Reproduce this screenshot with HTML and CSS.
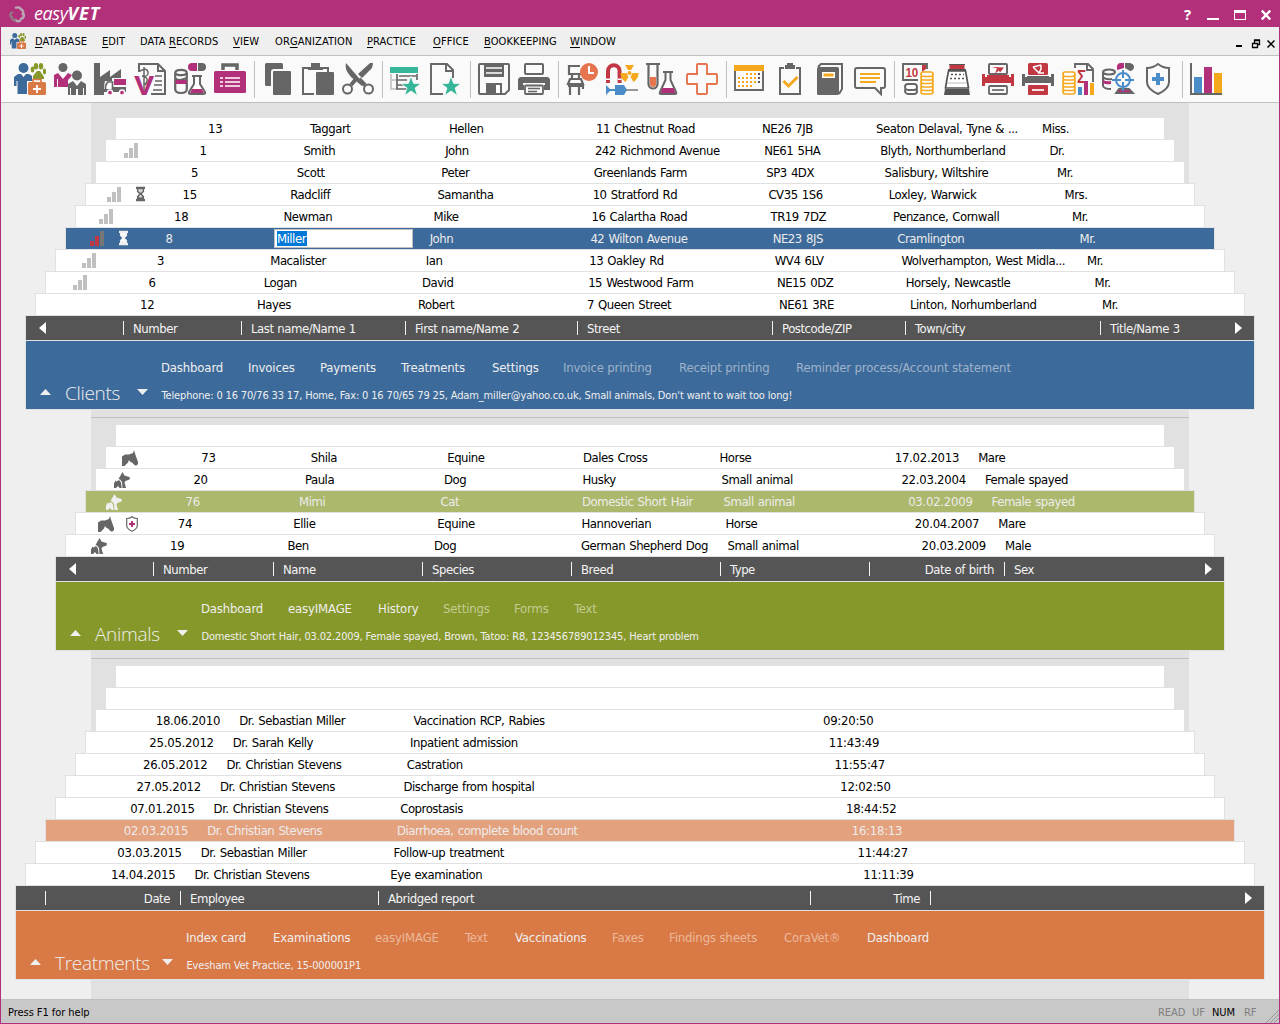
FILE: index.html
```html
<!DOCTYPE html>
<html lang="en">
<head>
<meta charset="utf-8">
<title>easyVET</title>
<link rel="stylesheet" href="styles.css">
</head>
<body>
<svg class="defs" width="0" height="0">
  <symbol id="bars" viewBox="0 0 14 15"><path d="M0 10h4v5H0z"/><path d="M5 5h4v10H5z"/><path class="last" d="M10 0h4v15h-4z"/></symbol>
  <symbol id="glass" viewBox="0 0 10 16"><path fill="currentColor" d="M0 0h10v2.500H9v3L6.500 8 9 10.500v3h1V16H0v-2.500h1v-3L3.500 8 1 5.500v-3H0z"/><path class="hole" d="M2.500 2.800h5v1.800L5 7 2.500 4.600zM4.500 9h1L7 11l-1 1H4l-1-1z"/></symbol>
  <symbol id="horse" viewBox="0 0 16 16"><path fill="currentColor" d="M0 16V6.500l3-2h4L11 3l1-3 1 3.500L16 12v2l-1.500 1.500H13L10 12.500 8.500 12 7 10l-1 2.500L2.500 16z"/></symbol>
  <symbol id="dog" viewBox="0 0 16 16"><path fill="currentColor" d="M8.500 0L10.500 3.500 16 5.200l-.5 2.300L11.500 9l-1 1.500L12 16H8.500L8 10 6 7.500 4.500 7z"/><path fill="currentColor" d="M0 16v-4.500L1.500 8.500l1 1L5 8l2 2.500L7.700 16H5.500L4 14l-2 2z"/></symbol>
  <symbol id="coins" viewBox="0 0 14 24"><g fill="#fff" stroke="#f5a81c" stroke-width="1.700"><rect x="1" y="18.500" width="12" height="4.500" rx="2.200"/><rect x="1" y="15" width="12" height="4.500" rx="2.200"/><rect x="1" y="11.500" width="12" height="4.500" rx="2.200"/><rect x="1" y="8" width="12" height="4.500" rx="2.200"/><rect x="1" y="4.500" width="12" height="4.500" rx="2.200"/><rect x="1" y="1" width="12" height="4.500" rx="2.200"/></g></symbol>
  <symbol id="team" viewBox="0 0 32 32">
    <circle cx="9.500" cy="5" r="5" fill="#3c6a9a"/><path fill="#3c6a9a" d="M4 11h3l2.500 3 2.500-3h3l3 2v6l-4 2v10H3.500V18H2.500v5H0V14z"/>
    <g fill="#869829"><ellipse cx="18.500" cy="6.500" rx="1.800" ry="3"/><ellipse cx="22" cy="3.200" rx="2.200" ry="3.200"/><ellipse cx="27" cy="3.200" rx="2.200" ry="3.200"/><ellipse cx="30.500" cy="8.500" rx="1.600" ry="3"/><path d="M19 13l4-5h3l4 6v2H19z"/></g>
    <rect x="13" y="18" width="20" height="15" fill="#fafafa"/><path d="M19 19.500v-3h8v3" fill="none" stroke="#d97946" stroke-width="1.700"/><rect x="14" y="19" width="18" height="13" rx="1.500" fill="#d97946"/><path d="M23 22v8M19 26h8" stroke="#fff" stroke-width="1.800"/>
  </symbol>
</svg>
<div class="window">
  <header class="titlebar">
    <svg class="swirl" viewBox="0 0 17 17" fill="none" stroke="#bba6b4" stroke-width="2.400"><path d="M6 2q5-2 6 2M12 3q4 3 1 6M15 8q0 5-4 5M12 14q-4 3-6-1"/><path d="M7 15q-5-1-4-5M3 12Q-1 8 4 6" stroke="#8e7a87"/></svg>
    <h1 class="brand">easy<b>VET</b></h1>
    <div class="wincontrols"><span class="help">?</span>
      <svg width="12" height="14" viewBox="0 0 12 14"><path fill="#fff" d="M0 10h12v2H0z"/></svg>
      <svg width="12" height="14" viewBox="0 0 12 14"><path fill="#fff" fill-rule="evenodd" d="M0 2h12v10H0zM1 5v6h10V5z"/></svg>
      <svg width="10" height="14" viewBox="0 0 10 14"><path stroke="#fff" stroke-width="2.400" d="M.8 2.500l8.400 9M9.200 2.500l-8.400 9"/></svg>
    </div>
  </header>
  <nav class="menubar">
    <svg class="appicon"><use href="#team"/></svg>
    <div class="menus"><span><u>D</u>ATABASE</span><span><u>E</u>DIT</span><span>DATA <u>R</u>ECORDS</span><span><u>V</u>IEW</span><span>OR<u>G</u>ANIZATION</span><span><u>P</u>RACTICE</span><span><u>O</u>FFICE</span><span><u>B</u>OOKKEEPING</span><span><u>W</u>INDOW</span></div>
    <svg class="mdi" width="40" height="10" viewBox="0 0 40 10" fill="none" stroke="#000"><path d="M1 7h6" stroke-width="2"/><path d="M17.500 4.500h5v4h-5zM17 4.500h6M19.500 4V1.500h5v4H23M19 1h6" stroke-width="1.300"/><path d="M32.500 1.500l7 7M39.500 1.500l-7 7" stroke-width="1.500"/></svg>
  </nav>
  <div class="toolbar">
    <svg><use href="#team"/></svg>
    <svg viewBox="0 0 32 32"><circle cx="9" cy="4.500" r="4.500" fill="#666"/><path fill="#b2307a" d="M0 24V12l4-2 5 6 5-6 4 2-2 3-2 2v7H4v-8H3v8z"/><circle cx="23" cy="12.500" r="5" fill="#666"/><path fill="#666" d="M14 32V21l5-3 4 5 4-5 5 3v11h-2v-7h-1v7h-5v-6h-2v6h-5v-7h-1v7z"/></svg>
    <svg viewBox="0 0 32 32"><path fill="#666" d="M0 0h6v14l10-7v7l11-8v9H18v3H11l-1 5v9H0z"/><path d="M11.500 27v-4l2-4h5v8z" fill="#fff" stroke="#666" stroke-width="1.700"/><path fill="#666" d="M19 24h13v5H10v-3h9z"/><path fill="#b2307a" d="M20 16h12v6H20z"/><g fill="#b2307a" stroke="#fafafa" stroke-width="1.500"><circle cx="16" cy="29.500" r="2.600"/><circle cx="28" cy="29.500" r="2.600"/></g></svg>
    <svg viewBox="0 0 32 32"><path d="M5 9V1h19l7 7v23H17M24 1v7h7" fill="none" stroke="#666" stroke-width="2"/><path d="M21 13h7M21 18h7M20 22h8M19 27h9M10 4v25M6 8q7-4 8 1t-6 4q6 1 5 5t-3 4" fill="none" stroke="#666" stroke-width="1.500"/><text x="0" y="32" font-size="28" font-weight="700" textLength="20" lengthAdjust="spacingAndGlyphs" fill="#b2307a" font-family="Liberation Sans">V</text></svg>
    <svg viewBox="0 0 32 32"><g fill="none" stroke="#666" stroke-width="2.200"><ellipse cx="7" cy="9.500" rx="5.700" ry="2.700"/><path d="M1.200 10v16q0 4 5.800 4t5.800-4V10M1.200 15q2 4 11.600 0"/></g><path d="M1.500 17h11v4h-11z" fill="#b2307a"/><path d="M18 0h5v8h-5a4 4 0 010-8z" fill="#b2307a"/><path d="M24 0h4a4 4 0 010 8h-4z" fill="#666"/><path d="M18 13h10M20 13v8l-5 8q-1 2 2 2h12q3 0 2-2l-5-8v-8" fill="#fff" stroke="#666" stroke-width="2"/><path d="M18 26h10l2 4H16z" fill="#b2307a"/></svg>
    <svg viewBox="0 0 32 32"><path d="M9 7V2h14v5" fill="none" stroke="#666" stroke-width="3.500"/><rect y="8" width="32" height="22" rx="1.500" fill="#b2307a"/><path d="M6 15h3M6 19h3M6 23h3M11 15h15M11 19h15M11 23h15" stroke="#fff" stroke-width="1.700"/></svg>
    <i></i>
    <svg viewBox="0 0 32 32"><rect x="3" width="18" height="23" rx="1.500" fill="#666"/><rect x="10" y="7" width="20" height="26" rx="2" fill="#666" stroke="#fafafa" stroke-width="2"/></svg>
    <svg viewBox="0 0 32 32"><path d="M12 31H1V5h5M25 5h-3" fill="none" stroke="#666" stroke-width="2"/><path d="M6 7V4h3V0h9v4h3v3z" fill="#666"/><path d="M21 5h5v5" fill="none" stroke="#666" stroke-width="2"/><rect x="14" y="9" width="18" height="23" rx="1" fill="#666"/></svg>
    <svg viewBox="0 0 32 32"><path d="M4 0l18 21-2 2L9 14Q2 6 4 0zM31 0q0 5-4 8l-7 7-4-4L28 0z" fill="#666"/><path d="M14 16l-5 6M17 16l6 6" stroke="#666" stroke-width="4"/><circle cx="5.500" cy="26" r="4.500" fill="#fafafa" stroke="#666" stroke-width="2"/><circle cx="26.500" cy="26" r="4.500" fill="#fafafa" stroke="#666" stroke-width="2"/></svg>
    <i></i>
    <svg viewBox="0 0 32 32"><path fill="#35b698" d="M0 4h28v6H0z"/><path d="M1 11v15h6M1 17h6" fill="none" stroke="#ccc" stroke-width="2"/><path d="M7 11v15h11M7 17h10M7 22h8M27 11v6M9 13h17" fill="none" stroke="#666" stroke-width="1.700"/><path fill="#35b698" stroke="#fafafa" stroke-width=".8" d="M21 13l2.600 7.400h7.400l-5.900 4.600 2.300 7.500-6.400-4.500-6.400 4.500 2.400-7.500L11 20.400h7.400z"/></svg>
    <svg viewBox="0 0 32 32"><path d="M13 31H1V1h16l6 6v8M16 1v7h7" fill="none" stroke="#666" stroke-width="1.900"/><path fill="#35b698" stroke="#fafafa" stroke-width=".8" d="M21 13l2.600 7.400h7.400l-5.900 4.600 2.300 7.500-6.400-4.500-6.400 4.500 2.400-7.500L11 20.400h7.400z"/></svg>
    <i></i>
    <svg viewBox="0 0 32 32"><path d="M2 1h28q1 0 1 1v25l-4 4H2q-1 0-1-1V2q0-1 1-1z" fill="none" stroke="#666" stroke-width="2"/><path fill="#666" d="M6 2h20v12H6zM8 20h16v12H8z"/><path d="M8 5h16M8 10h16" stroke="#fff" stroke-width="1.600"/><path d="M18 22h4v8h-4z" fill="#fff"/></svg>
    <svg viewBox="0 0 32 32"><path fill="#666" d="M2 14h28l2 2v11h-6v-5H6v5H0V16z"/><rect x="7" y="1" width="18" height="10" rx="1" fill="#fafafa" stroke="#666" stroke-width="2"/><path d="M5 20h22v2H5z" fill="#fafafa"/><rect x="7" y="22.500" width="18" height="8.500" rx="1" fill="#fafafa" stroke="#666" stroke-width="1.800"/><path d="M10 25.500h12M10 28.500h9" stroke="#666" stroke-width="1.500"/></svg>
    <i></i>
    <svg viewBox="0 0 32 32"><path d="M14 3H3v8h12M6 11v4M13 11v4M4 16h11l2 5H2zM4 22v10M13 24v8M2 23h15v3" fill="none" stroke="#666" stroke-width="2.200"/><circle cx="23" cy="9" r="9" fill="#e6744e"/><path d="M23 3v7h5" fill="none" stroke="#fff" stroke-width="2"/></svg>
    <svg viewBox="0 0 32 32"><path d="M2 20V8a5.800 5.800 0 0111.600 0v12" fill="none" stroke="#c13843" stroke-width="4"/><path d="M0 15.500h4v1.500H0zM11.600 15.500h4v1.500h-4z" fill="#fff"/><g fill="#f5a81c"><circle cx="23.500" cy="10" r="2"/><path d="M19 2h9l-3 5h-3zM14.500 10h6l2 4-3 5q-5-3-5-9zM32.500 10h-6l-2 4 3 5q5-3 5-9z"/></g><path fill="#4b8dc9" d="M0 22l4 4h5v-4h9l3 5-3 5H9v-4H4l-4 4z"/><path d="M20 27h12" stroke="#777" stroke-width="1.500"/></svg>
    <svg viewBox="0 0 32 32"><path d="M0 1h14M2.500 1v20a4.500 4.500 0 009 0V1" fill="none" stroke="#666" stroke-width="2.200"/><path d="M4 14h6v7a3 3 0 01-6 0z" fill="#e6744e"/><path d="M17 9h10M19.500 9v8L14 29q-1 2 1 2h14q2 0 1-2l-5.500-12V9" fill="#fff" stroke="#666" stroke-width="2"/><path d="M16.500 25h11l2 5h-15z" fill="#b2307a"/></svg>
    <svg viewBox="0 0 32 32"><path d="M12 1h8q1 0 1 1v9h9q1 0 1 1v8q0 1-1 1h-9v9q0 1-1 1h-8q-1 0-1-1v-9H2q-1 0-1-1v-8q0-1 1-1h9V2q0-1 1-1z" fill="none" stroke="#e6744e" stroke-width="1.900"/></svg>
    <i></i>
    <svg viewBox="0 0 32 32"><path fill="none" stroke="#666" stroke-width="1.900" d="M1 7v20h28V7"/><path fill="#f5a81c" d="M0 2h30v6H0z"/><g stroke="#f5a81c" stroke-width="2" stroke-dasharray="2 2"><path d="M12 11h12M4 15h20M4 19h20M4 23h14"/></g><path d="M25 10v10" stroke="#555" stroke-width="2" stroke-dasharray="2 2"/></svg>
    <svg viewBox="0 0 32 32"><path d="M10 5H6v26h20V5h-4" fill="none" stroke="#666" stroke-width="2"/><path d="M11 6V2h2V0h6v2h2v4z" fill="#666"/><path d="M9.500 18l5 5 9-9" fill="none" stroke="#f5a81c" stroke-width="3"/></svg>
    <svg viewBox="0 0 32 32"><path d="M4 4l3-3h21v25l-3 5" fill="none" stroke="#666" stroke-width="2"/><rect x="3" y="4" width="22" height="28" rx="1.500" fill="#666"/><path d="M8 9h13v6H8z" fill="#fff"/><path d="M9.500 10.500h10v3h-10z" fill="#f5a81c"/></svg>
    <svg viewBox="0 0 32 32"><path d="M3 5h26q2 0 2 2v16q0 2-2 2h-2v6l-6-6H3q-2 0-2-2V7q0-2 2-2z" fill="none" stroke="#666" stroke-width="2"/><path d="M6 11h20M6 15h20M6 19h16" stroke="#f5a81c" stroke-width="1.900"/></svg>
    <i></i>
    <svg viewBox="0 0 32 32"><path d="M16 17H1V1h24v5" fill="none" stroke="#666" stroke-width="1.900"/><path d="M20 2h4v4l-4 3z" fill="#c13843"/><text x="3.500" y="14" font-size="13" font-weight="700" textLength="12.500" lengthAdjust="spacingAndGlyphs" fill="#c13843" font-family="Liberation Sans">10</text><g fill="#fff" stroke="#666" stroke-width="1.900"><rect x="3" y="25" width="12" height="6" rx="3"/><rect x="3" y="21" width="12" height="6" rx="3"/></g><use href="#coins" x="18" y="8" width="14" height="24"/></svg>
    <svg viewBox="0 0 32 32"><path d="M7.500 2h15v6h-15z" fill="#c13843"/><path d="M7 1h16v1H7zM6 6h18v2H6z" fill="#555"/><path d="M6.500 8h17l1.500 8 1.500 9h-23L5 16z" fill="#fff" stroke="#555" stroke-width="1.700"/><path d="M9 11.500h13M8 15.500h16" stroke="#555" stroke-width="1.700" stroke-dasharray="2 2"/><path d="M5 20h20" stroke="#bbb"/><path d="M3 26h24l1 6H2z" fill="#555"/></svg>
    <svg viewBox="0 0 32 32"><path fill="#c13843" d="M0 11h3v3h26v-3h3v12h-3v-3H3v3H0z"/><path d="M5 14V10h22v4" fill="#fafafa"/><rect x="7" y="1" width="18" height="10" rx="1" fill="#fafafa" stroke="#666" stroke-width="2"/><path d="M5 12h22v2H5z" fill="#c13843"/><path d="M10 4l12 .5-4 5-1-2-4 3 2-5z" fill="#c13843"/><rect x="7" y="23" width="18" height="8" rx="1" fill="#fafafa" stroke="#666" stroke-width="1.800"/><path d="M10 27h12" stroke="#666" stroke-width="1.700"/></svg>
    <svg viewBox="0 0 32 32"><path fill="#666" d="M0 11h3v3h26v-3h3v12h-3v-3H3v3H0z"/><path d="M5 13h22v2H5z" fill="#666"/><rect x="6" width="20" height="12" rx="1.500" fill="#c13843"/><path d="M11 4l8-2M11 4l6 6M19 2v4l-2 4h5" fill="none" stroke="#fff" stroke-width="1.500"/><rect x="6" y="22" width="20" height="10" rx="1" fill="#c13843"/><path d="M10 27h12" stroke="#fff" stroke-width="1.700"/></svg>
    <svg viewBox="0 0 32 32"><path d="M13 5V1h13l5 5v13M25 1v6h6" fill="none" stroke="#666" stroke-width="1.900"/><text x="15" y="20" font-size="19" font-weight="700" textLength="9" lengthAdjust="spacingAndGlyphs" fill="#c13843" font-family="Liberation Sans">Σ</text><use href="#coins" x="0" y="8" width="14" height="24"/><path d="M16 24h4v8h-4z" fill="#4b8dc9"/><path d="M22 18h4v14h-4z" fill="#b2307a"/><path d="M28 20h4v12h-4z" fill="#f5a81c"/></svg>
    <svg viewBox="0 0 32 32"><g fill="none" stroke="#666" stroke-width="2"><ellipse cx="7" cy="9" rx="6" ry="2.500"/><path d="M1 9v14q1 3 8 3M1 14q2 3 9 2"/></g><path d="M1 17q4 2 8 1v3q-5 1-8-1z" fill="#b2307a"/><path d="M18 0h4v5l-7 2q-1-6 3-7z" fill="#b2307a"/><path d="M23 0h5q4 1 4 4t-4 4l-5-3z" fill="#666"/><path d="M14 30l3-4h10l4 4z" fill="#b2307a" stroke="#666" stroke-width="1.800"/><circle cx="21" cy="17" r="7" fill="#fafafa" stroke="#4b8dc9" stroke-width="2"/><path d="M21 7v8M21 19v9M10 17h9M23 17h9" stroke="#4b8dc9" stroke-width="2"/></svg>
    <svg viewBox="0 0 32 32"><path d="M16 1q5 4 11 4v14q0 7-11 12Q5 26 5 19V5q6 0 11-4z" fill="none" stroke="#666" stroke-width="2"/><path d="M16 10v12M10 16h12" stroke="#4b8dc9" stroke-width="4"/></svg>
    <i></i>
    <svg viewBox="0 0 32 32"><path d="M1 0v31h31" fill="none" stroke="#666" stroke-width="2"/><path d="M4 14h8v16H4z" fill="#4b8dc9"/><path d="M14 4h8v26h-8z" fill="#b2307a"/><path d="M24 10h8v20h-8z" fill="#f5a81c"/></svg>
  </div>
  <main>
   <div class="stripe">
    <section class="clients">
      <div class="row i0"><span></span><span class="n">13</span><span>Taggart</span><span>Hellen</span><span>11 Chestnut Road</span><span>NE26 7JB</span><span>Seaton Delaval, Tyne &amp; ...</span><span>Miss.</span></div>
      <div class="row i1"><span><svg class="bars"><use href="#bars"/></svg></span><span class="n">1</span><span>Smith</span><span>John</span><span>242 Richmond Avenue</span><span>NE61 5HA</span><span>Blyth, Northumberland</span><span>Dr.</span></div>
      <div class="row i2"><span></span><span class="n">5</span><span>Scott</span><span>Peter</span><span>Greenlands Farm</span><span>SP3 4DX</span><span>Salisbury, Wiltshire</span><span>Mr.</span></div>
      <div class="row i3"><span><svg class="bars"><use href="#bars"/></svg><svg class="glass"><use href="#glass"/></svg></span><span class="n">15</span><span>Radcliff</span><span>Samantha</span><span>10 Stratford Rd</span><span>CV35 1S6</span><span>Loxley, Warwick</span><span>Mrs.</span></div>
      <div class="row i4"><span><svg class="bars"><use href="#bars"/></svg></span><span class="n">18</span><span>Newman</span><span>Mike</span><span>16 Calartha Road</span><span>TR19 7DZ</span><span>Penzance, Cornwall</span><span>Mr.</span></div>
      <div class="row i5 selected"><span><svg class="bars hot" viewBox="0 0 14 15"><path d="M0 10h4v5H0zM5 5h4v10H5z"/><path fill="#777" d="M10 0h4v15h-4z"/></svg><svg class="glass"><use href="#glass"/></svg></span><span class="n">8</span><span><span class="edit"><mark>Miller</mark></span></span><span>John</span><span>42 Wilton Avenue</span><span>NE23 8JS</span><span>Cramlington</span><span>Mr.</span></div>
      <div class="row i6"><span><svg class="bars"><use href="#bars"/></svg></span><span class="n">3</span><span>Macalister</span><span>Ian</span><span>13 Oakley Rd</span><span>WV4 6LV</span><span>Wolverhampton, West Midla...</span><span>Mr.</span></div>
      <div class="row i7"><span><svg class="bars"><use href="#bars"/></svg></span><span class="n">6</span><span>Logan</span><span>David</span><span>15 Westwood Farm</span><span>NE15 0DZ</span><span>Horsely, Newcastle</span><span>Mr.</span></div>
      <div class="row i8"><span></span><span class="n">12</span><span>Hayes</span><span>Robert</span><span>7 Queen Street</span><span>NE61 3RE</span><span>Linton, Norhumberland</span><span>Mr.</span></div>
      <div class="head"><span class="prev"></span><span>Number</span><span>Last name/Name 1</span><span>First name/Name 2</span><span>Street</span><span>Postcode/ZIP</span><span>Town/city</span><span>Title/Name 3</span><b class="next"></b></div>
      <div class="foot"><div class="name"><b class="up"></b><h2>Clients</h2><b class="down"></b></div>
        <div class="info"><div class="tabs"><a>Dashboard</a><a>Invoices</a><a>Payments</a><a>Treatments</a><a>Settings</a><a class="off">Invoice printing</a><a class="off">Receipt printing</a><a class="off">Reminder process/Account statement</a></div><p>Telephone: 0 16 70/76 33 17, Home, Fax: 0 16 70/65 79 25, Adam_miller@yahoo.co.uk, Small animals, Don't want to wait too long!</p></div></div>
    </section>
    <hr>
    <section class="animals">
      <div class="row i0"></div>
      <div class="row i1"><span><svg class="pet"><use href="#horse"/></svg></span><span class="n">73</span><span>Shila</span><span>Equine</span><span>Dales Cross</span><span>Horse</span><span class="r">17.02.2013</span><span>Mare</span></div>
      <div class="row i2"><span><svg class="pet"><use href="#dog"/></svg></span><span class="n">20</span><span>Paula</span><span>Dog</span><span>Husky</span><span>Small animal</span><span class="r">22.03.2004</span><span>Female spayed</span></div>
      <div class="row i3 selected"><span><svg class="pet"><use href="#dog"/></svg></span><span class="n">76</span><span>Mimi</span><span>Cat</span><span>Domestic Short Hair</span><span>Small animal</span><span class="r">03.02.2009</span><span>Female spayed</span></div>
      <div class="row i4"><span><svg class="pet"><use href="#horse"/></svg><svg class="shield" viewBox="0 0 12 16"><path d="M6 .8q2 1.700 5.300 1.700v7.500Q11 13 6 15.200 1 13 .7 10V2.500Q4 2.500 6 .8z" fill="none" stroke="#666" stroke-width="1.200"/><path d="M6 5v6M3 8h6" stroke="#b2307a" stroke-width="2"/></svg></span><span class="n">74</span><span>Ellie</span><span>Equine</span><span>Hannoverian</span><span>Horse</span><span class="r">20.04.2007</span><span>Mare</span></div>
      <div class="row i5"><span><svg class="pet"><use href="#dog"/></svg></span><span class="n">19</span><span>Ben</span><span>Dog</span><span>German Shepherd Dog</span><span>Small animal</span><span class="r">20.03.2009</span><span>Male</span></div>
      <div class="head"><span class="prev"></span><span>Number</span><span>Name</span><span>Species</span><span>Breed</span><span>Type</span><span class="r">Date of birth</span><span>Sex</span><b class="next"></b></div>
      <div class="foot"><div class="name"><b class="up"></b><h2>Animals</h2><b class="down"></b></div>
        <div class="info"><div class="tabs"><a>Dashboard</a><a>easyIMAGE</a><a>History</a><a class="off">Settings</a><a class="off">Forms</a><a class="off">Text</a></div><p>Domestic Short Hair, 03.02.2009, Female spayed, Brown, Tatoo: R8, 123456789012345, Heart problem</p></div></div>
    </section>
    <hr>
    <section class="treatments">
      <div class="row i0"></div>
      <div class="row i1"></div>
      <div class="row i2"><span class="r">18.06.2010</span><span>Dr. Sebastian Miller</span><span>Vaccination RCP, Rabies</span><span class="r">09:20:50</span></div>
      <div class="row i3"><span class="r">25.05.2012</span><span>Dr. Sarah Kelly</span><span>Inpatient admission</span><span class="r">11:43:49</span></div>
      <div class="row i4"><span class="r">26.05.2012</span><span>Dr. Christian Stevens</span><span>Castration</span><span class="r">11:55:47</span></div>
      <div class="row i5"><span class="r">27.05.2012</span><span>Dr. Christian Stevens</span><span>Discharge from hospital</span><span class="r">12:02:50</span></div>
      <div class="row i6"><span class="r">07.01.2015</span><span>Dr. Christian Stevens</span><span>Coprostasis</span><span class="r">18:44:52</span></div>
      <div class="row i7 selected"><span class="r">02.03.2015</span><span>Dr. Christian Stevens</span><span>Diarrhoea, complete blood count</span><span class="r">16:18:13</span></div>
      <div class="row i8"><span class="r">03.03.2015</span><span>Dr. Sebastian Miller</span><span>Follow-up treatment</span><span class="r">11:44:27</span></div>
      <div class="row i9"><span class="r">14.04.2015</span><span>Dr. Christian Stevens</span><span>Eye examination</span><span class="r">11:11:39</span></div>
      <div class="head"><span class="none"></span><span class="r">Date</span><span>Employee</span><span>Abridged report</span><span class="r">Time</span><span></span><b class="next"></b></div>
      <div class="foot"><div class="name"><b class="up"></b><h2>Treatments</h2><b class="down"></b></div>
        <div class="info"><div class="tabs"><a>Index card</a><a>Examinations</a><a class="off">easyIMAGE</a><a class="off">Text</a><a>Vaccinations</a><a class="off">Faxes</a><a class="off">Findings sheets</a><a class="off">CoraVet®</a><a>Dashboard</a></div><p>Evesham Vet Practice, 15-000001P1</p></div></div>
    </section>
   </div>
  </main>
  <footer class="status"><span>Press F1 for help</span><div class="flags"><span>READ</span><span>UF</span><span class="on">NUM</span><span>RF</span></div>
    <svg width="13" height="13" viewBox="0 0 13 13" stroke="#999"><path d="M0 13L13 0M4 13l9-9M8 13l5-5"/></svg></footer>
</div>
</body>
</html>
```
FILE: styles.css
```css
* { box-sizing: border-box; }
body { margin: 0; font: 13px "DejaVu Sans Condensed", "DejaVu Sans", sans-serif; font-stretch: condensed; letter-spacing: -0.25px; color: #000; }
h1, h2, p, hr { margin: 0; font-weight: 400; }
.defs { display: none; }
.window { width: 1280px; height: 1024px; display: flex; flex-direction: column; border: solid #b2307a; border-width: 0 1px 1px; background: #efefef; overflow: hidden; }

.titlebar { height: 27px; flex: none; display: flex; align-items: center; background: #b2307a; color: #fff; padding: 0 8px 0 8px; }
.swirl { width: 17px; height: 17px; margin-top: 2px; }
.brand { font: italic 18px/27px "Open Sans", "Noto Sans", sans-serif; letter-spacing: -0.4px; margin-left: 8px; flex: 1; }
.brand b { letter-spacing: 0.9px; }
.wincontrols { display: flex; gap: 15px; align-items: center; padding-top: 3px; }
.help { font: bold 15px "Noto Sans", sans-serif; margin: -2px 1px 0 0; }

.menubar { height: 29px; flex: none; display: flex; align-items: center; border-bottom: 1px solid #c0c0c0; padding: 0 4px 0 9px; font-size: 11px; letter-spacing: 0.1px; }
.appicon { width: 16px; height: 16px; margin-right: 9px; }
.menus { flex: 1; display: grid; grid-template-columns: 67px 38px 93px 42px 92px 66px 51px 86px 60px; }
.menus span { white-space: nowrap; }
.menus u { text-underline-offset: 2px; }
.mdi { margin-top: 5px; }

.toolbar { height: 47px; flex: none; display: flex; align-items: center; gap: 8px; background: #fafafa; border-bottom: 1px solid #c0c0c0; padding-left: 13px; }
.toolbar svg { width: 32px; height: 32px; flex: none; overflow: visible; }
.toolbar i { width: 1px; height: 37px; background: #c0c0c0; margin-right: -1px; }

main { flex: 1; display: flex; justify-content: center; min-height: 0; }
.stripe { width: 1098px; background: #e1e1e1; display: flex; flex-direction: column; align-items: center; padding-top: 14px; }
section { display: flex; flex-direction: column; align-items: center; }
hr { width: 100%; height: 1px; border: 0; background: #c0c0c0; margin: 7px 0 6px; }
.clients { --bg: #3c6a9a; --sel: #3c6a9a; width: 1230px; --off: #9fb3cb; }
.animals { --bg: #869829; --sel: #acb86b; width: 1170px; --off: #c3cc94; }
.treatments { --bg: #d97946; --sel: #e4a17d; width: 1250px; --off: #ecb99a; }

.row { display: grid; height: 22px; width: calc(1050px + 20px * var(--i)); border: solid #e1e1e1; border-width: 1px 1px 0; background: #fff; line-height: 21px; white-space: nowrap; letter-spacing: -0.45px; word-spacing: 0.8px; }
.row > .r, .row > .n { letter-spacing: -0.25px; }
.row > span:has(svg) { display: flex; align-items: center; gap: 14.5px; color: #666; }
.i0 { --i: 0; } .i1 { --i: 1; } .i2 { --i: 2; } .i3 { --i: 3; } .i4 { --i: 4; }
.i5 { --i: 5; } .i6 { --i: 6; } .i7 { --i: 7; } .i8 { --i: 8; } .i9 { --i: 9; }
.selected { background: var(--sel); color: #ececec; }
.row.selected > span:has(svg) { color: #efefef; }
.r { text-align: right; }
.clients .row { grid-template-columns: calc(92px + 1.5px * var(--i)) calc(102px + 1.875px * var(--i)) calc(139px + 2.75px * var(--i)) calc(147px + 2.75px * var(--i)) calc(166px + 3.25px * var(--i)) calc(114px + 2.125px * var(--i)) calc(166px + 3.25px * var(--i)) 1fr; }
.clients .row > span:first-child { padding-left: calc(16.700px + 1.500px * var(--i)); }
.animals .row { grid-template-columns: calc(93px + 2.2px * var(--i)) calc(107.500px + 2px * var(--i)) calc(134px + 2.5px * var(--i)) calc(133px + 2.8px * var(--i)) calc(134px + 2.5px * var(--i)) 110px calc(125px + 4.7px * var(--i)) 1fr; }
.animals .row > span:first-child { padding-left: calc(14px + 2.1px * var(--i)); gap: 12px; }
.animals .row > span:last-child { padding-left: 19px; }
.treatments .row { grid-template-columns: calc(117px + 3.6px * var(--i)) calc(187px + 3.1px * var(--i)) 300px calc(142px + 9.050px * var(--i)) 1fr; }
.treatments .row > span:nth-child(2) { padding-left: 19px; }
.bars { width: 14px; height: 15px; fill: #c0c0c0; }
.hot { fill: #c13843; }
.glass { width: 9px; height: 16px; margin-top: -1px; }
.hole { fill: #fff; opacity: .75; }
.selected .hole { fill: var(--sel); }
.pet { width: 16px; height: 16px; }
.shield { width: 12px; height: 16px; }
.edit { display: block; width: 139px; height: 19px; margin: 1px 0 0 -3px; padding: 1px 2px; border: 1px solid #c0c0c0; background: #fff; line-height: 15px; }
mark { display: inline-block; width: 30px; background: #0078d7; color: #fff; }

.head { width: 100%; height: 25px; display: grid; align-items: center; border: solid #e1e1e1; border-width: 1px 1px 0; background: #555; color: #f4f4f4; line-height: 24px; white-space: nowrap; letter-spacing: -0.45px; word-spacing: 0.5px; }
.head > span { height: 14px; line-height: 15px; border-left: 1px solid #f4f4f4; padding: 0 10px 0 9px; }
.head > .prev, .head > .none { border-left: 0; }
.clients .head { grid-template-columns: 97px 118px 164px 172px 195px 133px 195px 135px 1fr; }
.animals .head { grid-template-columns: 97px 120px 149px 149px 149px 149px 135px 201px 1fr; }
.treatments .head { grid-template-columns: 29px 135px 198px 432px 120px 315px 1fr; }
.prev::before, .next::before { content: ""; display: block; width: 7px; height: 12px; background: #fff; }
.prev::before { clip-path: polygon(100% 0, 100% 100%, 0 50%); margin: 1px 0 0 4px; }
.next::before { clip-path: polygon(0 0, 0 100%, 100% 50%); }

.foot { width: 100%; height: 70px; display: flex; border: 1px solid #e1e1e1; background: var(--bg); color: #efefef; white-space: nowrap; }
.name { display: flex; align-items: center; height: 28px; margin-top: 37px; padding-left: 14px; }
.clients .name { width: 135px; } .animals .name { width: 145px; } .treatments .name { width: 170px; }
.name h2 { font: 19px/28px "Open Sans", "Noto Sans", sans-serif; font-weight: 300; letter-spacing: -0.3px; margin: 2px 0 0 14px; flex: 1; }
.up, .down { width: 11px; height: 6px; background: #efefef; }
.up { clip-path: polygon(50% 0, 100% 100%, 0 100%); }
.down { clip-path: polygon(0 0, 100% 0, 50% 100%); margin-right: 13px; }
.tabs { display: grid; line-height: 18px; margin-top: 18px; letter-spacing: -0.15px; }
.clients .tabs { grid-template-columns: 87px 72px 81px 91px 71px 116px 117px auto; }
.animals .tabs { grid-template-columns: 87px 90px 65px 71px 60px auto; }
.treatments .tabs { grid-template-columns: 87px 102px 90px 50px 97px 57px 115px 83px auto; }
.off { color: var(--off); }
.info p { font-size: 11px; line-height: 14px; margin: 12px 0 0 .5px; letter-spacing: -0.15px; }

.status { height: 24px; flex: none; display: flex; align-items: center; background: #c8c8c8; border-top: 1px solid #c0c0c0; padding-left: 7px; font-size: 11px; line-height: 15px; letter-spacing: -0.05px; }
.status > span, .flags { margin-top: 2px; }
.flags { margin-left: auto; display: grid; grid-template-columns: 34px 20px 32px 22px; color: #808080; }
.status > .flags { margin-left: auto; }
.on { color: #000; }
.status svg { align-self: flex-end; }
```
